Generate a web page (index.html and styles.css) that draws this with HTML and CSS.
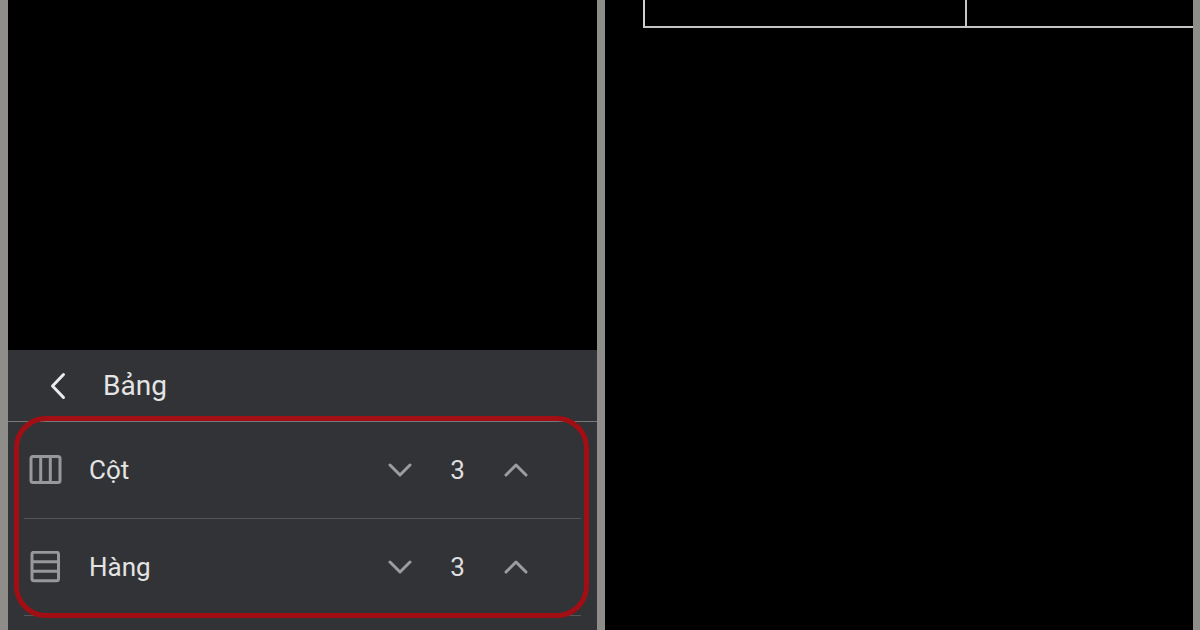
FILE: index.html
```html
<!DOCTYPE html>
<html lang="vi">
<head>
<meta charset="utf-8">
<title>Bảng</title>
<link rel="stylesheet" href="styles.css">
</head>
<body>
<div class="screen">
  <section class="panel">
    <div class="spacer"></div>
    <div class="sheet">
      <header class="sheet-head">
        <svg class="back" viewBox="0 0 20 30" aria-hidden="true"><path d="M15.5 3.5 4.5 15l11 11.5"/></svg>
        <span class="sheet-title">Bảng</span>
      </header>
      <div class="rows">
        <div class="row row-first">
          <svg class="row-icon" viewBox="0 0 34 32" aria-hidden="true"><rect x="3" y="2.5" width="29" height="26" rx="2"/><path d="M12.7 2.5v26M22.3 2.5v26"/></svg>
          <span class="row-label">Cột</span>
          <div class="stepper">
            <svg class="chev" viewBox="0 0 24 14" aria-hidden="true"><path d="M2 2l10 10L22 2"/></svg>
            <span class="count">3</span>
            <svg class="chev" viewBox="0 0 24 14" aria-hidden="true"><path d="M2 12 12 2l10 10"/></svg>
          </div>
        </div>
        <div class="row">
          <svg class="row-icon" viewBox="0 0 34 32" aria-hidden="true"><rect x="4" y="1.2" width="26.5" height="28.5" rx="2"/><path d="M4 10.7h26.5M4 20.2h26.5"/></svg>
          <span class="row-label">Hàng</span>
          <div class="stepper">
            <svg class="chev" viewBox="0 0 24 14" aria-hidden="true"><path d="M2 2l10 10L22 2"/></svg>
            <span class="count">3</span>
            <svg class="chev" viewBox="0 0 24 14" aria-hidden="true"><path d="M2 12 12 2l10 10"/></svg>
          </div>
        </div>
      </div>
      <div class="highlight"></div>
    </div>
  </section>
  <section class="panel">
    <div class="doc-table">
      <div class="cell cell-wide"></div>
      <div class="cell"></div>
    </div>
  </section>
</div>
</body>
</html>
```

FILE: styles.css
```css
html, body {
  margin: 0;
  padding: 0;
  height: 100%;
  background: #8f8d89;
  overflow: hidden;
}

.screen {
  display: flex;
  gap: 8px;
  width: 1200px;
  height: 630px;
  padding: 0 7px 0 8px;
  box-sizing: border-box;
  font-family: Roboto, "Liberation Sans", sans-serif;
}

.panel {
  flex: 1 1 0;
  display: flex;
  flex-direction: column;
  min-width: 0;
  background: #000;
}

.spacer {
  height: 350px;
  flex: none;
}

.sheet {
  position: relative;
  flex: 1;
  background: #323336;
  color: #e4e4e4;
}

.sheet-head {
  display: flex;
  align-items: center;
  height: 71px;
  padding-left: 40px;
  border-bottom: 1px solid #77787a;
  box-sizing: content-box;
}

.back {
  width: 20px;
  height: 30px;
  fill: none;
  stroke: #ececec;
  stroke-width: 3;
  stroke-linecap: round;
  stroke-linejoin: round;
}

.sheet-title {
  margin-left: 35px;
  font-size: 28px;
  line-height: 32px;
}

.rows {
  margin-left: 16px;
  margin-right: 16px;
  border-bottom: 1px solid #55565a;
}

.row {
  display: flex;
  align-items: center;
  height: 96px;
}

.row-first {
  border-bottom: 1px solid #55565a;
}

.row-icon {
  width: 34px;
  height: 32px;
  flex: none;
  fill: none;
  stroke: #97989b;
  stroke-width: 3;
  margin-left: 4px;
}

.row-label {
  margin-left: 27px;
  font-size: 26px;
  line-height: 32px;
}

.stepper {
  display: flex;
  align-items: center;
  margin-left: auto;
  margin-right: 53px;
}

.chev {
  width: 24px;
  height: 14px;
  fill: none;
  stroke: #9c9d9f;
  stroke-width: 3;
  stroke-linecap: round;
  stroke-linejoin: round;
}

.count {
  width: 92px;
  text-align: center;
  font-size: 26px;
  line-height: 32px;
  color: #dedede;
}

.highlight {
  position: absolute;
  left: 6px;
  right: 8px;
  top: 66px;
  height: 202px;
  border: 5px solid #a10f15;
  border-radius: 32px;
  box-sizing: border-box;
}

.doc-table {
  display: flex;
  height: 28px;
  margin-left: 38px;
  border-left: 2px solid #d0d0d0;
  border-bottom: 2px solid #c4c4c4;
  box-sizing: border-box;
}

.cell {
  flex: 1;
}

.cell-wide {
  flex: none;
  width: 320px;
  border-right: 2px solid #c4c4c4;
}
```
